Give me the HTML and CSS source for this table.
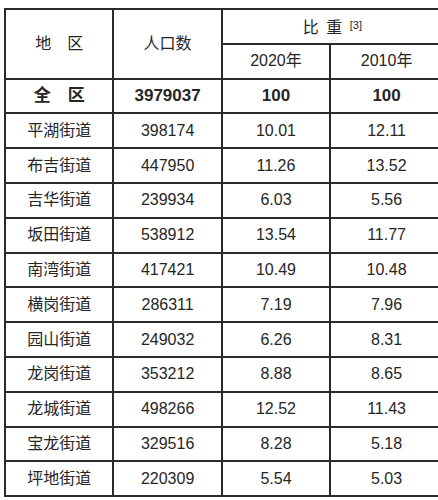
FILE: index.html
```html
<!DOCTYPE html>
<html lang="zh">
<head>
<meta charset="utf-8">
<title>人口比重</title>
<link rel="stylesheet" href="styles.css">
</head>
<body>
<table class="pop">
  <colgroup><col class="c"><col class="c"><col class="c"><col class="last"></colgroup>
  <thead>
    <tr>
      <th rowspan="2">地　区</th>
      <th rowspan="2">人口数</th>
      <th colspan="2" class="group">比 重 <span class="ref">[3]</span></th>
    </tr>
    <tr>
      <th>2020年</th>
      <th>2010年</th>
    </tr>
  </thead>
  <tbody>
    <tr class="total"><td>全　区</td><td>3979037</td><td>100</td><td>100</td></tr>
    <tr><td>平湖街道</td><td>398174</td><td>10.01</td><td>12.11</td></tr>
    <tr><td>布吉街道</td><td>447950</td><td>11.26</td><td>13.52</td></tr>
    <tr><td>吉华街道</td><td>239934</td><td>6.03</td><td>5.56</td></tr>
    <tr><td>坂田街道</td><td>538912</td><td>13.54</td><td>11.77</td></tr>
    <tr><td>南湾街道</td><td>417421</td><td>10.49</td><td>10.48</td></tr>
    <tr><td>横岗街道</td><td>286311</td><td>7.19</td><td>7.96</td></tr>
    <tr><td>园山街道</td><td>249032</td><td>6.26</td><td>8.31</td></tr>
    <tr><td>龙岗街道</td><td>353212</td><td>8.88</td><td>8.65</td></tr>
    <tr><td>龙城街道</td><td>498266</td><td>12.52</td><td>11.43</td></tr>
    <tr><td>宝龙街道</td><td>329516</td><td>8.28</td><td>5.18</td></tr>
    <tr><td>坪地街道</td><td>220309</td><td>5.54</td><td>5.03</td></tr>
  </tbody>
</table>
</body>
</html>
```
FILE: styles.css
```css
html, body {
  margin: 0;
  padding: 0;
  background: #ffffff;
  overflow: hidden;
}

body {
  padding: 8px 0 0 4px;
  font-family: "Liberation Sans", "Noto Sans CJK SC", sans-serif;
  color: #262626;
}

.pop {
  width: 438px;
  border-collapse: separate;
  border-spacing: 0;
  table-layout: fixed;
  border-top: 2px solid #2b2b2b;
}

.pop col.c {
  width: 108.4px;
}

.pop tr {
  height: 34.8px;
}

.pop th,
.pop td {
  border-left: 2px solid #2b2b2b;
  border-bottom: 2px solid #2b2b2b;
  padding: 0;
  text-align: center;
  vertical-align: middle;
  font-size: 16px;
  font-weight: normal;
  line-height: 20px;
  white-space: nowrap;
}

.pop .group {
  word-spacing: 3px;
}

.pop .ref {
  font-size: 11px;
  vertical-align: 4px;
}

.pop .total td {
  font-weight: bold;
  font-size: 17px;
}
```
